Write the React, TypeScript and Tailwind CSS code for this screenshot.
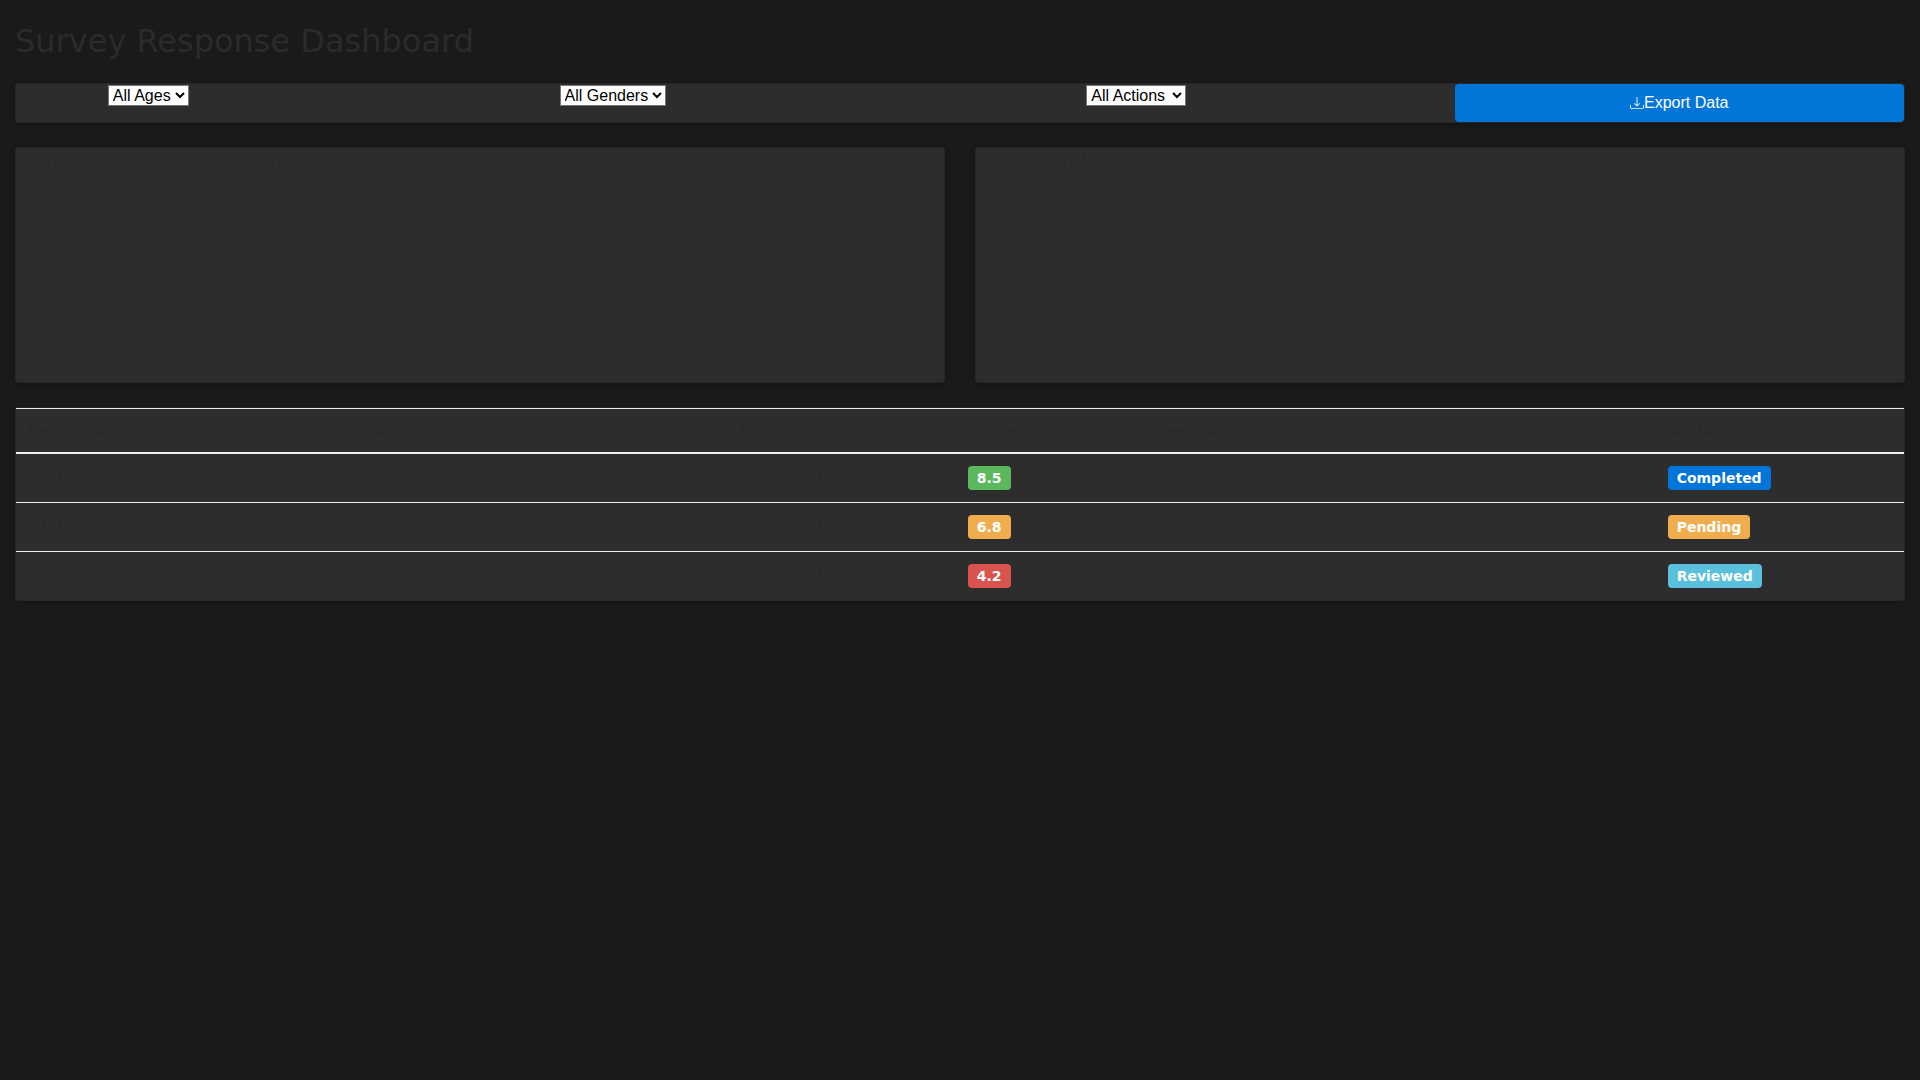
import { useState } from "react";
import { BsArrowDownUp, BsDownload } from "react-icons/bs";

const card = "rounded-[4px] border border-black/[0.125] bg-[#2d2d2d] shadow-[0_2px_4px_rgba(0,0,0,0.2)]";

const filters = [
  { id: "age", label: "Age Range", options: ["All Ages", "18-24", "25-34", "35-44"] },
  { id: "gender", label: "Gender", options: ["All Genders", "Male", "Female", "Other"] },
  { id: "action", label: "Action Status", options: ["All Actions", "Completed", "Pending", "Reviewed"] },
];

const columns = [
  { name: "Respondent ID", sortable: true },
  { name: "Age", sortable: true },
  { name: "Gender", sortable: true },
  { name: "Date", sortable: true },
  { name: "Score", sortable: true },
  { name: "Feedback", sortable: false },
  { name: "Action", sortable: false },
];

const rows = [
  { id: "#001", age: 25, gender: "Male", date: "2023-11-01", score: "8.5", scoreBg: "bg-[#5cb85c]", feedback: "Excellent service", action: "Completed", actionBg: "bg-[#0275d8]" },
  { id: "#002", age: 34, gender: "Female", date: "2023-11-02", score: "6.8", scoreBg: "bg-[#f0ad4e]", feedback: "Good but needs improvement", action: "Pending", actionBg: "bg-[#f0ad4e]" },
  { id: "#003", age: 42, gender: "Other", date: "2023-11-03", score: "4.2", scoreBg: "bg-[#d9534f]", feedback: "Not satisfied", action: "Reviewed", actionBg: "bg-[#5bc0de]" },
];

function Filter({ id, label, options }: { id: string; label: string; options: string[] }) {
  const [value, setValue] = useState(options[0]);
  return (
    <div className="leading-6">
      <label htmlFor={id}>{label}</label>{" "}
      <select
        id={id}
        value={value}
        onChange={(e) => setValue(e.target.value)}
        className="border border-[#767676] bg-white font-['Liberation_Sans',sans-serif] text-base leading-[normal] text-black"
      >
        {options.map((o) => (
          <option key={o}>{o}</option>
        ))}
      </select>
    </div>
  );
}

function Badge({ text, bg }: { text: string; bg: string }) {
  return (
    <span className={`inline-block rounded-[4px] px-[9px] py-1 align-top text-sm leading-4 font-bold text-white ${bg}`}>{text}</span>
  );
}

export default function App() {
  return (
    <div className="min-h-screen bg-[#1a1a1a] px-[15px] pt-[22px] font-['DejaVu_Sans',sans-serif] text-base leading-[19px] text-[#292b2c]">
      <h1 className="mb-[22px] text-[32px] leading-[39px]">Survey Response Dashboard</h1>

      <div className={`mb-6 grid grid-cols-4 gap-[30px] ${card}`}>
        {filters.map((f) => (
          <Filter key={f.id} {...f} />
        ))}
        <button
          type="button"
          className="flex h-[38px] items-center justify-center rounded-[4px] bg-[#0275d8] font-['Liberation_Sans',sans-serif] text-base text-white"
        >
          <BsDownload size={14} />
          Export Data
        </button>
      </div>

      <div className="mb-6 grid grid-cols-2 gap-[30px]">
        {["Response Scores Over Time", "Demographic Breakdown"].map((title) => (
          <section key={title} className={`min-h-[236px] ${card}`}>
            <h2 className="text-xl leading-[22px]">{title}</h2>
          </section>
        ))}
      </div>

      <div className={card}>
        <table className="w-full border-collapse text-left">
          <thead>
            <tr>
              {columns.map((c) => (
                <th key={c.name} className="border-t border-b-2 border-[#eceeef] p-3 font-bold">
                  {c.name} {c.sortable && <BsArrowDownUp size={14} className="inline align-[-2px]" />}
                </th>
              ))}
            </tr>
          </thead>
          <tbody>
            {rows.map((r) => (
              <tr key={r.id} className="border-t border-[#eceeef] align-top first:border-t-0">
                <td className="p-3">{r.id}</td>
                <td className="p-3">{r.age}</td>
                <td className="p-3">{r.gender}</td>
                <td className="p-3">{r.date}</td>
                <td className="p-3"><Badge text={r.score} bg={r.scoreBg} /></td>
                <td className="p-3">{r.feedback}</td>
                <td className="p-3"><Badge text={r.action} bg={r.actionBg} /></td>
              </tr>
            ))}
          </tbody>
        </table>
      </div>
    </div>
  );
}
